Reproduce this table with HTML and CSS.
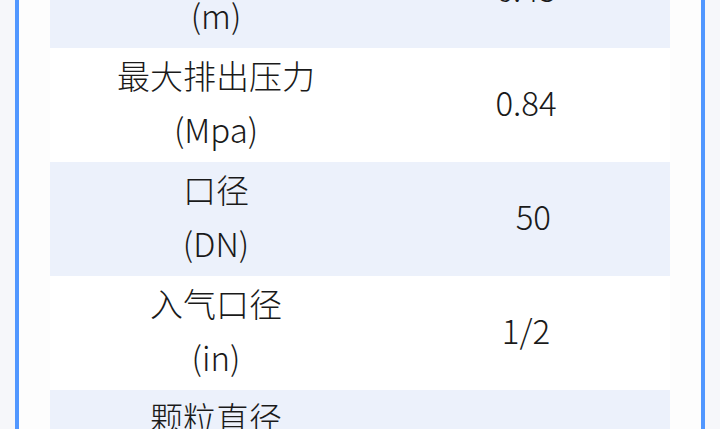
FILE: index.html
```html
<!DOCTYPE html>
<html lang="zh-CN">

<head>
    <meta charset="UTF-8">
    <meta name="viewport" content="width=device-width, initial-scale=1.0">
    <title>产品参数</title>
    <link rel="stylesheet" href="styles.css">
</head>

<body>
    <div class="wrap">
        <div class="card">
            <!-- 参数表 -->
            <div class="table">
                <div class="row blue">
                    <div class="name">最大吸程<br>(m)</div>
                    <div class="val">6.45</div>
                </div>
                <div class="row">
                    <div class="name">最大排出压力<br>(Mpa)</div>
                    <div class="val">0.84</div>
                </div>
                <div class="row blue">
                    <div class="name">口径<br>(DN)</div>
                    <div class="val">&nbsp;&nbsp;50</div>
                </div>
                <div class="row">
                    <div class="name">入气口径<br>(in)</div>
                    <div class="val">1/2</div>
                </div>
                <div class="row blue">
                    <div class="name">颗粒直径<br>(mm)</div>
                    <div class="val">4.8</div>
                </div>
            </div>
        </div>
    </div>
</body>

</html>
```

FILE: styles.css
```css
* {
    margin: 0;
    padding: 0;
    box-sizing: border-box;
}

body {
    background-color: #f6f7fa;
    font-family: "Noto Sans CJK SC", "Noto Sans", sans-serif;
    font-weight: 300;
    color: #1a1a1a;
    height: 429px;
    overflow: hidden;
}

.wrap {
    padding: 0 15px;
}

.card {
    background-color: #fdfdfd;
    border-left: 4px solid #5197ff;
    border-right: 4px solid #5197ff;
    padding: 0 31px;
}

.table {
    margin-top: -66px;
    background-color: #fff;
}

.row {
    display: grid;
    grid-template-columns: 332px 1fr;
    align-items: center;
    padding: 0 0 6px;
    font-size: 33px;
    line-height: 54px;
    text-align: center;
}

.blue {
    background-color: #ecf1fb;
}
```
